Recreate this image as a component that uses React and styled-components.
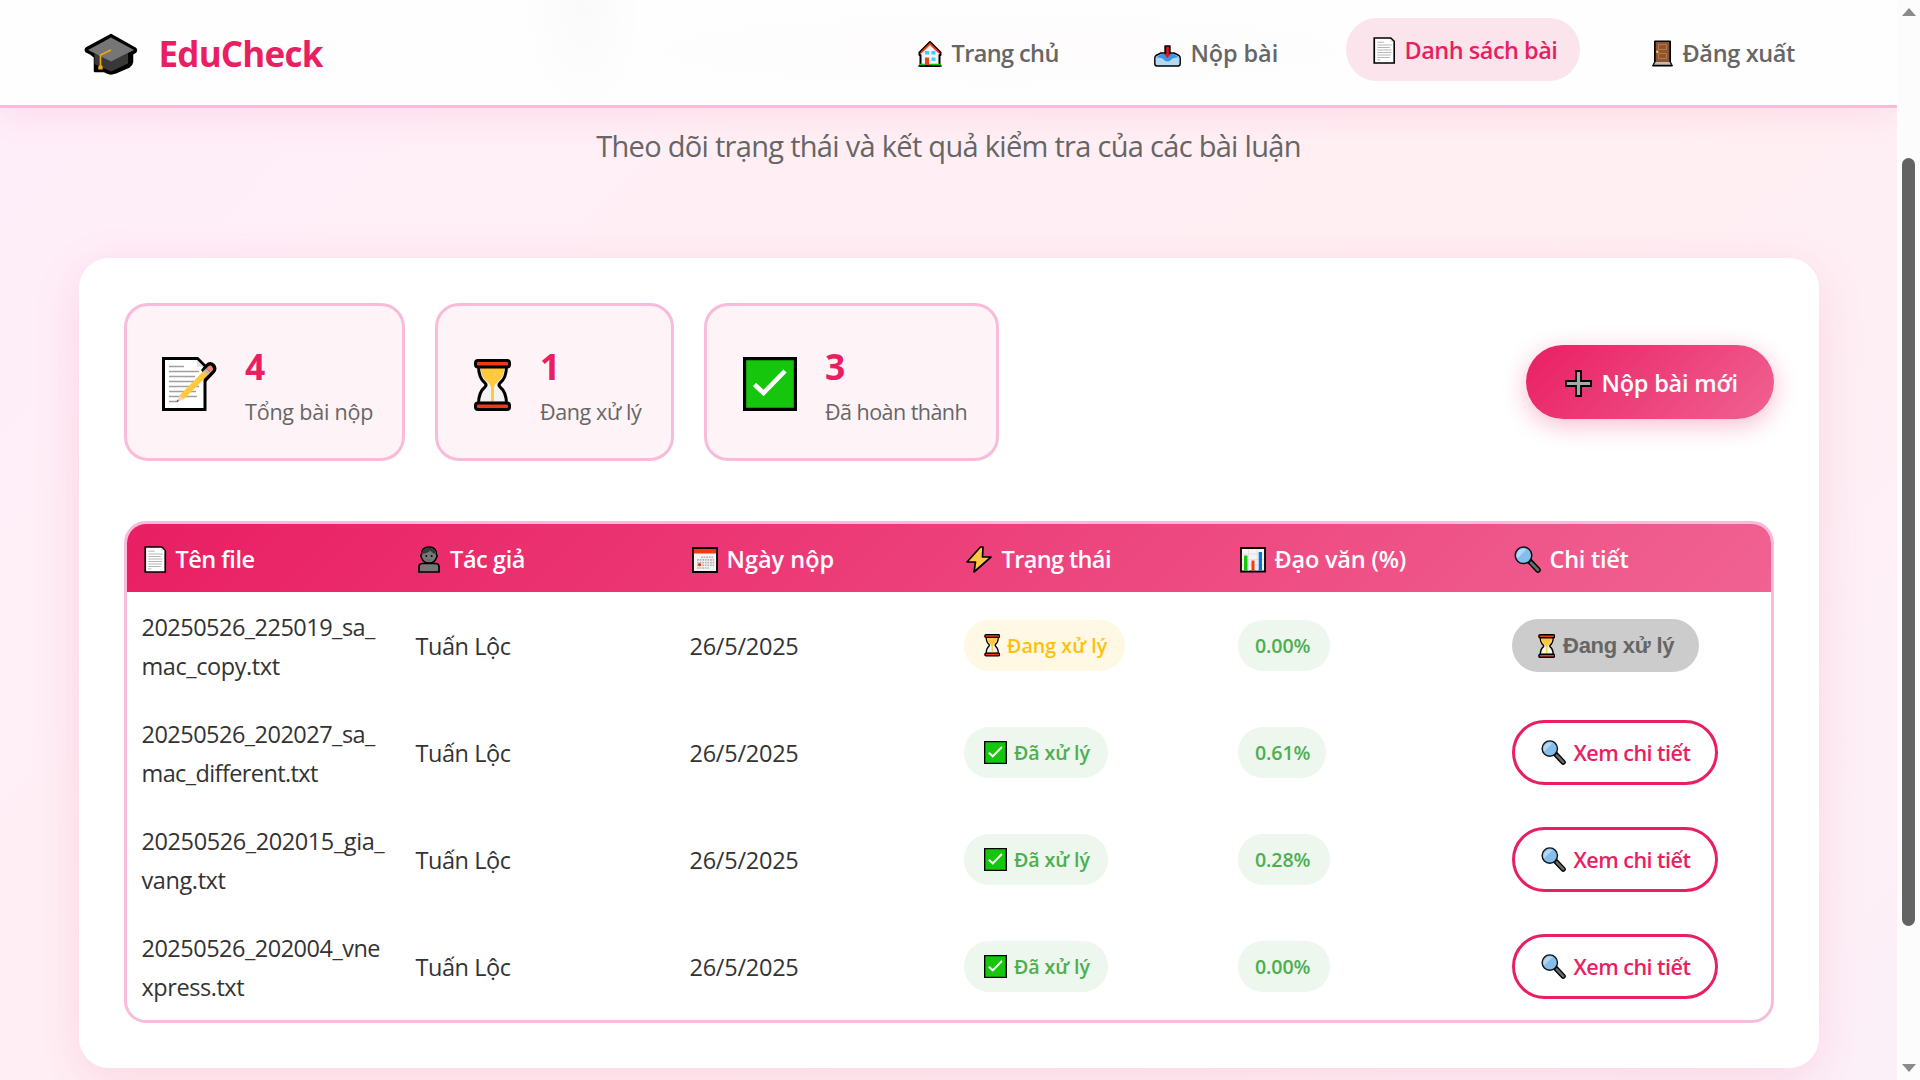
import React from 'react';
import styled, { createGlobalStyle, css } from 'styled-components';

const PINK = '#e91e63';
const SOFT = '#f8bbd9';
const SANS = '"Open Sans", "Noto Sans", sans-serif';

const GlobalStyle = createGlobalStyle`
  * { box-sizing: border-box; }
  body { margin: 0; overflow: hidden; font-family: ${SANS}; color: #333; }
`;

/* ---------- icons ---------- */

const ICONS = {
  cap: {
    box: '0 0 54 42',
    art: (
      <>
        <path d="M27 2 51 15.5Q53 17 51 19L48 21V29Q47.5 32 45 33.5L31 39.500Q27 41.500 23 39.500L20 38H11V24L7.500 21 2.500 18.500Q1 16.500 3 15Z" fill="#000" stroke="#000" strokeWidth="2.500" strokeLinejoin="round" />
        <path d="M10.500 20V31L27 38.500 44 30.500V20L27 28Z" fill="#383838" />
        <path d="M27 4.500 50 17 27 28.500 4 17Z" fill="#767676" />
        <path d="M27 17 16.500 22V33" fill="none" stroke="#f3a90c" strokeWidth="1.600" />
        <path d="M14.300 36.500V33.500L16.500 31.500 18.700 33.500V36.500Z" fill="#f3a90c" />
      </>
    ),
  },
  house: {
    box: '0 0 24 27',
    art: (
      <>
        <path d="M12 2 22.500 12.500V15H21.500V26H2.500V15H1.500V12.500Z" fill="#f4f4f4" stroke="#000" strokeWidth="2" strokeLinejoin="round" />
        <path d="M3 12.700 12 3.800 21 12.700" fill="none" stroke="#f03a17" strokeWidth="1.800" />
        <path d="M7 11h4v3.500H7zM13.500 11h4v3.500h-4zM13.500 17.500h4V21h-4z" fill="#30d5fb" />
        <path d="M7 17.500h4V25H7z" fill="#e8441f" />
        <path d="M1 23.700h6V26H1zM11 23.700h12V26H11z" fill="#16c60c" />
        <path d="M.3 26h23.400" stroke="#000" strokeWidth="1.400" />
      </>
    ),
  },
  inbox: {
    box: '0 0 27 27',
    art: (
      <>
        <path d="M11 6H16V13H20L25 15.500Q26.200 16.500 26.200 18V23.500Q26.200 26 24 26H3Q.8 26 .8 23.500V18Q.8 16.500 2 15.500L7 13H11Z" fill="#b4daf2" stroke="#000" strokeWidth="1.400" strokeLinejoin="round" />
        <path d="M7.500 14H19.500L25 17.500Q20 17 17.800 19 16 21.500 13.500 21.500 11 21.500 9.200 19 7 17 2 17.500Z" fill="#3b96e0" />
        <path d="M11 6H16V14H11Z" fill="#111" />
        <path d="M12.300 7H14.800V14H17L13.500 18 10 14H12.300Z" fill="#e81123" />
      </>
    ),
  },
  page: {
    box: '0 0 22 27',
    art: (
      <>
        <path d="M1 1H17.500L21 4.500V26H1Z" fill="#fff" stroke="#000" strokeWidth="1.700" />
        <path d="M17.200 1.700V4.800H20.300Z" fill="#ddd" />
        <path d="M4 5.200H10.500M4 8H18.500M4 10.500H16.500M4 13H18M4 15.500H18M4 18H17.500M4 20.500H16.500M4 22.800H7" stroke="#b5b5b5" strokeWidth="1" />
      </>
    ),
  },
  door: {
    box: '0 0 21 27',
    art: (
      <>
        <path d="M2.500 1H18.500V22L20.500 26H.5L2.500 22Z" fill="#000" stroke="#000" strokeLinejoin="round" />
        <path d="M3.700 1.900H17.300V22H3.700Z" fill="#8e562e" />
        <path d="M6.500 4.500H14.500V9.500H6.500ZM6.500 13.500H14.500V18.500H6.500Z" fill="none" stroke="#b5794c" strokeWidth="1" />
        <circle cx="5.300" cy="11.700" r="1.300" fill="#ffc83d" />
        <path d="M3.500 22H17.500L19 24.700H2Z" fill="#bdbdbd" />
      </>
    ),
  },
  memo: {
    box: '0 0 55 54',
    art: (
      <>
        <path d="M1.500 1.500H35.500L43 9V52.500H1.500Z" fill="#fff" stroke="#000" strokeWidth="3" />
        <path d="M35 3V10H42Z" fill="#e3e3e3" />
        <path d="M7 9.500H22M7 14.500H37M7 19.500H33M7 24.500H37M7 29.500H37M7 34.500H34M7 39.500H35M7 44.500H16" stroke="#a0a0a0" strokeWidth="1.400" />
        <path d="M40 13 44 8Q48 4 52 7.500 55.500 11.500 52 15.500L43 25V17Z" fill="#000" stroke="#000" strokeWidth="1.500" strokeLinejoin="round" />
        <path d="M17.500 38.500 42 13.500 46.500 17.500 21.500 42.500Z" fill="#ffc83d" />
        <path d="M17.500 38.500 21.500 42.500 14.500 45Z" fill="#f5d2c3" />
        <path d="M15.500 42.500 17 44.200 14.300 45Z" fill="#555" />
        <path d="M41.500 14 44 11.500 48.500 15.500 46 18Z" fill="#bdbdbd" />
        <path d="M44 11.500 46.500 9.200Q48.500 7.800 50.200 9.700 52 11.700 50.500 13.500L48.500 15.500Z" fill="#f4867a" />
      </>
    ),
  },
  hourglass: {
    box: '0 0 37 52',
    art: (
      <>
        <path d="M4.500 7Q4.500 19 11 24Q13 26 11 28Q4.500 33 4.500 45H32.500Q32.500 33 26 28Q24 26 26 24Q32.500 19 32.500 7Z" fill="#f2f2f2" stroke="#000" strokeWidth="3" />
        <path d="M6.500 8.500H30.500Q30 18 24 22.500 20 25.500 20 29V42.500H29L32 44H5L8 42.500H17V29Q17 25.500 13 22.500 7 18 6.500 8.500Z" fill="#ffc83d" />
        <rect x="1.500" y="1.500" width="34" height="6.500" rx="2.500" fill="#f03a17" stroke="#000" strokeWidth="3" />
        <rect x="1.500" y="44" width="34" height="6.500" rx="2.500" fill="#f03a17" stroke="#000" strokeWidth="3" />
        <path d="M21 15h1M26 14.500h1M23.500 19h1" stroke="#ffe49a" strokeWidth="1.200" />
      </>
    ),
  },
  check: {
    box: '0 0 54 54',
    art: (
      <>
        <path d="M1.500 1.500H52.500V52.500H1.500Z" fill="#16c60c" stroke="#000" strokeWidth="3.400" />
        <path d="M11.500 27.500 20.500 36 42 14" fill="none" stroke="#fff" strokeWidth="4.600" />
      </>
    ),
  },
  plus: {
    box: '0 0 27 27',
    art: <path d="M11 1H16V11H26V16H16V26H11V16H1V11H11Z" fill="#a8a8a8" stroke="#000" strokeWidth="1.800" />,
  },
  person: {
    box: '0 0 22 27',
    art: (
      <>
        <path d="M1 26V20.500Q1 17.500 4.500 17.500H17.500Q21 17.500 21 20.500V26Z" fill="#767676" stroke="#000" strokeWidth="1.700" />
        <path d="M11 1Q18.500 1 18.500 8.500 19.800 9.500 18.500 11.500 17 17 11 17 5 17 3.500 11.500 2.200 9.500 3.500 8.500 3.500 1 11 1Z" fill="#767676" stroke="#000" strokeWidth="1.500" />
        <path d="M4.300 8Q4 1.800 11 1.800 18 1.800 17.700 8 14 7.500 12.500 4.800 9 7.500 4.300 8Z" fill="#383838" />
        <circle cx="8.300" cy="10" r=".9" /><circle cx="13.700" cy="10" r=".9" />
        <path d="M8.800 13.700Q11 15 13.200 13.700" fill="none" stroke="#555" strokeWidth=".7" />
      </>
    ),
  },
  calendar: {
    box: '0 0 26 27',
    art: (
      <>
        <path d="M1 2H25V26H1Z" fill="#f4f4f4" stroke="#000" strokeWidth="1.800" />
        <path d="M1.900 2.900H24.100V7.500H1.900Z" fill="#f03a17" />
        <path d="M9 11.200H22M5 13.900H22M5 16.600H22M5 19.300H22M5 22H17" stroke="#b5b5b5" strokeWidth="1.600" strokeDasharray="1.800 .8" />
        <circle cx="7.500" cy="18.700" r="1.600" fill="#f03a17" />
      </>
    ),
  },
  bolt: {
    box: '0 0 26 27',
    art: <path d="M14.500 1 1 16H9.500L8 26 25 11H16.500L17 1Z" fill="#ffc83d" stroke="#000" strokeWidth="1.700" strokeLinejoin="round" />,
  },
  chart: {
    box: '0 0 26 27',
    art: (
      <>
        <path d="M1 2H25V25.500H1Z" fill="#f4f4f4" stroke="#000" strokeWidth="1.800" />
        <path d="M2 8H24M2 13.500H24M2 19H24M8.500 3V25M17 3V25" stroke="#dcdcdc" strokeWidth=".8" />
        <path d="M4 9.500H7.500V24.500H4Z" fill="#16c60c" />
        <path d="M11.500 14.500H14.500V24.500H11.500Z" fill="#f03a17" />
        <path d="M18.700 6H22V24.500H18.700Z" fill="#0078d7" />
      </>
    ),
  },
  lens: {
    box: '0 0 27 27',
    art: (
      <>
        <path d="M16 15.500 24 24" stroke="#000" strokeWidth="5.600" strokeLinecap="round" />
        <path d="M17 16.700 24 24" stroke="#636c70" strokeWidth="2.800" strokeLinecap="round" />
        <circle cx="9.500" cy="9.300" r="8.300" fill="#83beec" stroke="#111" strokeWidth="1.500" />
        <path d="M3.300 12.500A7 7 0 0 1 12.500 3.300Z" fill="#b4d8f3" />
      </>
    ),
  },
};

const IconSlot = styled.span`
  display: flex;
  flex: none;
  align-items: center;
  width: ${p => p.$advance}px;
  padding-left: ${p => p.$inset}px;
  padding-top: ${p => p.$drop}px;
`;

const Glyph = styled.svg`
  display: block;
  flex: none;
  width: ${p => p.$w}px;
  height: ${p => p.$h}px;
`;

function Icon({ name, w, h, inset = 0, drop = 0, advance }) {
  return (
    <IconSlot $advance={advance} $inset={inset} $drop={drop}>
      <Glyph viewBox={ICONS[name].box} $w={w} $h={h} aria-hidden="true">{ICONS[name].art}</Glyph>
    </IconSlot>
  );
}

/* ---------- page frame ---------- */

const Frame = styled.div`
  display: grid;
  grid-template-columns: 1fr 23px;
  height: 1080px;
  overflow: hidden;
`;

const Page = styled.div`
  height: 1080px;
  overflow: hidden;
  background: linear-gradient(135deg, #feeefa 0%, #ffeff5 30%, #ffeff3 60%, #fcf0f8 100%);
`;

const ScrollTrack = styled.div`
  display: flex;
  flex-direction: column;
  align-items: center;
  padding: 8px 0 8px;
  background: #fcfcfc;
`;

const ScrollArrow = styled.i`
  width: 0;
  height: 0;
  border: 7.500px solid transparent;
  ${p => p.$up
    ? css`border-top: 0; border-bottom: 8px solid #8a8a8a;`
    : css`border-bottom: 0; border-top: 8px solid #8a8a8a; margin-top: auto;`}
`;

const ScrollThumb = styled.div`
  width: 13px;
  height: 768px;
  margin-top: 142px;
  border-radius: 7px;
  background: #636363;
`;

/* ---------- text ---------- */

const Label = styled.span`
  white-space: nowrap;
  letter-spacing: ${p => p.$track || 0}px;
`;

/* ---------- navigation ---------- */

const NavBar = styled.nav`
  position: relative;
  z-index: 2;
  height: 108px;
  padding: 0 78.500px;
  display: flex;
  justify-content: space-between;
  background:
    radial-gradient(ellipse 62px 110px at 583px 10px, rgba(0, 0, 0, .014), transparent),
    radial-gradient(ellipse 420px 44px at 1000px 50px, rgba(233, 30, 99, .012), transparent),
    #fefefe;
  border-bottom: 3px solid ${SOFT};
  box-shadow: 0 5px 37px rgba(233, 30, 99, .1);
`;

const Brand = styled.div`
  display: flex;
  align-items: center;
  padding: 2px 0 0 5.500px;
  font-size: 35px;
  font-weight: 700;
  line-height: 56px;
  color: ${PINK};
`;

const Menu = styled.div`
  display: flex;
  align-items: center;
  gap: 44px;
`;

const MenuItem = styled.a`
  display: flex;
  align-items: center;
  width: ${p => p.$width}px;
  height: 63px;
  padding: 1px 0 0 25px;
  border-radius: 31px;
  font-size: 23.500px;
  font-weight: 600;
  color: ${p => (p.$active ? PINK : '#666')};
  background: ${p => (p.$active ? '#fce4ec' : 'transparent')};
  margin-bottom: ${p => (p.$active ? 6 : 0)}px;
`;

/* ---------- hero ---------- */

const Hero = styled.header`
  height: 150px;
  padding-top: 14px;
  text-align: center;
`;

const Subtitle = styled.p`
  margin: 0;
  font-size: 29px;
  line-height: 48px;
  color: #666;
`;

/* ---------- card ---------- */

const Card = styled.main`
  width: 1740px;
  margin: 0 auto;
  padding: 45px;
  border-radius: 30px;
  background: #fff;
  box-shadow: 0 12px 50px rgba(233, 30, 99, .12);
`;

const Summary = styled.section`
  display: flex;
  align-items: center;
  gap: 30px;
  height: 158px;
  margin-bottom: 60px;
`;

const Stat = styled.div`
  display: flex;
  align-items: center;
  width: ${p => p.$width}px;
  height: 158px;
  padding-left: 35.500px;
  border: 3px solid ${SOFT};
  border-radius: 24px;
  background: #fef3f7;
`;

const StatInfo = styled.div`
  display: flex;
  flex-direction: column;
  padding-top: 2px;
`;

const StatNumber = styled.strong`
  font-size: 35.500px;
  font-weight: 700;
  line-height: 57px;
  color: ${PINK};
`;

const StatLabel = styled(Label)`
  font-size: 21.500px;
  line-height: 34px;
  color: #666;
`;

const SubmitButton = styled.button`
  display: flex;
  align-items: center;
  width: 248px;
  height: 74px;
  margin-left: auto;
  padding: 2px 0 0 39px;
  border: 0;
  border-radius: 37px;
  font: 600 23.500px ${SANS};
  color: #fff;
  background: linear-gradient(135deg, ${PINK}, #f06292);
  box-shadow: 0 6px 25px rgba(233, 30, 99, .3);
`;

/* ---------- table ---------- */

const Table = styled.section`
  border: 3px solid ${SOFT};
  border-radius: 22px;
  overflow: hidden;
`;

const Columns = styled.div`
  display: grid;
  grid-template-columns: repeat(6, 1fr);
  align-items: center;
`;

const HeadRow = styled(Columns)`
  height: 68px;
  padding-top: 2px;
  font-size: 23.500px;
  font-weight: 600;
  color: #fff;
  background: linear-gradient(135deg, ${PINK}, #f06292);
`;

const BodyRow = styled(Columns)`
  height: 107px;
  font-size: 23.500px;
`;

const Cell = styled.div`
  display: flex;
  align-items: center;
  padding-left: 15px;
`;

const FileName = styled.div`
  display: flex;
  flex-direction: column;
  padding-top: 2px;
  line-height: 38.500px;
`;

const CellText = styled(Label)`
  padding-top: 1px;
`;

const Badge = styled.span`
  display: flex;
  align-items: center;
  height: 51px;
  width: ${p => p.$width}px;
  padding-left: ${p => p.$pad}px;
  border-radius: 25px;
  font-size: 19.600px;
  font-weight: 600;
  color: ${p => (p.$waiting ? '#ffc107' : '#4caf50')};
  background: ${p => (p.$waiting ? '#fff8e5' : '#edf7ed')};
`;

const DetailButton = styled.button`
  display: flex;
  align-items: center;
  width: 206px;
  height: 65px;
  padding: 0 0 0 26px;
  border: 3px solid ${PINK};
  border-radius: 33px;
  background: #fff;
  font: 600 21.500px ${SANS};
  color: ${PINK};
`;

const WaitingButton = styled.button`
  display: flex;
  align-items: center;
  width: 187px;
  height: 53px;
  padding: 1px 0 0 26px;
  border: 0;
  border-radius: 26.500px;
  background: #ccc;
  font: 700 22px "Liberation Sans", sans-serif;
  color: #666;
`;

/* ---------- data ---------- */

const MENU = [
  { text: 'Trang chủ', track: -0.6, width: 192, icon: { name: 'house', w: 24, h: 27, inset: 2, advance: 36 } },
  { text: 'Nộp bài', track: -0.1, width: 175, icon: { name: 'inbox', w: 27, h: 27, inset: 2.500, advance: 39 } },
  { text: 'Danh sách bài', track: -0.5, width: 234.500, active: true, icon: { name: 'page', w: 22.500, h: 27, inset: 2, advance: 34 } },
  { text: 'Đăng xuất', track: -0.35, width: 194.500, icon: { name: 'door', w: 21, h: 27, inset: 3, advance: 33.500 } },
];

const STATS = [
  { value: 4, text: 'Tổng bài nộp', track: -0.2, width: 281, icon: { name: 'memo', w: 55, h: 54, drop: 4, advance: 83 } },
  { value: 1, text: 'Đang xử lý', track: -0.38, width: 239, icon: { name: 'hourglass', w: 37, h: 52, drop: 6, inset: 1, advance: 67 } },
  { value: 3, text: 'Đã hoàn thành', track: -0.54, width: 295, icon: { name: 'check', w: 54, h: 54, drop: 4, inset: 0.500, advance: 83 } },
];

const HEADS = [
  { text: 'Tên file', track: -0.5, icon: { name: 'page', w: 22.500, h: 27, inset: 2.500, advance: 34 } },
  { text: 'Tác giả', track: -0.4, icon: { name: 'person', w: 22, h: 27, inset: 2.500, advance: 34.500 } },
  { text: 'Ngày nộp', track: 0, icon: { name: 'calendar', w: 26, h: 27, inset: 2.500, advance: 37 } },
  { text: 'Trạng thái', track: -0.62, icon: { name: 'bolt', w: 26, h: 27, inset: 2, advance: 38 } },
  { text: 'Đạo văn (%)', track: -0.2, icon: { name: 'chart', w: 26, h: 27, inset: 2.500, advance: 37 } },
  { text: 'Chi tiết', track: -0.25, icon: { name: 'lens', w: 27, h: 27, inset: 2, advance: 38 } },
];

const ROWS = [
  { file: ['20250526_225019_sa_', 'mac_copy.txt'], track: [-0.52, -0.42], waiting: true, percent: '0.00%', percentWidth: 92 },
  { file: ['20250526_202027_sa_', 'mac_different.txt'], track: [-0.52, -0.6], percent: '0.61%', percentWidth: 88 },
  { file: ['20250526_202015_gia_', 'vang.txt'], track: [-0.4, -0.4], percent: '0.28%', percentWidth: 92 },
  { file: ['20250526_202004_vne', 'xpress.txt'], track: [-0.5, -0.45], percent: '0.00%', percentWidth: 92 },
];

function SubmissionRow({ row }) {
  return (
    <BodyRow>
      <Cell>
        <FileName>
          <Label $track={row.track[0]}>{row.file[0]}</Label>
          <Label $track={row.track[1]}>{row.file[1]}</Label>
        </FileName>
      </Cell>
      <Cell><CellText $track={-0.45}>Tuấn Lộc</CellText></Cell>
      <Cell><CellText $track={-0.25}>26/5/2025</CellText></Cell>
      <Cell>
        {row.waiting ? (
          <Badge $waiting $width={161} $pad={20}>
            <Icon name="hourglass" w={16.500} h={22.500} advance={23.500} />
            <Label $track={0.05}>Đang xử lý</Label>
          </Badge>
        ) : (
          <Badge $width={144} $pad={20}>
            <Icon name="check" w={23} h={23} advance={30.500} />
            <Label $track={-0.1}>Đã xử lý</Label>
          </Badge>
        )}
      </Cell>
      <Cell><Badge $width={row.percentWidth} $pad={17.500}><Label $track={-0.1}>{row.percent}</Label></Badge></Cell>
      <Cell>
        {row.waiting ? (
          <WaitingButton>
            <Icon name="hourglass" w={17.500} h={24} advance={25.500} />
            <Label $track={-0.25}>Đang xử lý</Label>
          </WaitingButton>
        ) : (
          <DetailButton>
            <Icon name="lens" w={25} h={25} advance={33} />
            <Label $track={-0.52}>Xem chi tiết</Label>
          </DetailButton>
        )}
      </Cell>
    </BodyRow>
  );
}

export default function App() {
  return (
    <Frame>
      <GlobalStyle />
      <Page>
        <NavBar>
          <Brand>
            <Icon name="cap" w={54} h={42} drop={1} advance={74.500} />
            <Label $track={-0.8}>EduCheck</Label>
          </Brand>
          <Menu>
            {MENU.map(item => (
              <MenuItem key={item.text} $width={item.width} $active={item.active}>
                <Icon {...item.icon} />
                <Label $track={item.track}>{item.text}</Label>
              </MenuItem>
            ))}
          </Menu>
        </NavBar>
        <Hero>
          <Subtitle>
            <Label $track={-0.7}>Theo dõi trạng thái và kết quả kiểm tra của các bài luận</Label>
          </Subtitle>
        </Hero>
        <Card>
          <Summary>
            {STATS.map(stat => (
              <Stat key={stat.text} $width={stat.width}>
                <Icon {...stat.icon} />
                <StatInfo>
                  <StatNumber>{stat.value}</StatNumber>
                  <StatLabel $track={stat.track}>{stat.text}</StatLabel>
                </StatInfo>
              </Stat>
            ))}
            <SubmitButton>
              <Icon name="plus" w={27} h={27} advance={37} />
              <Label $track={-0.2}>Nộp bài mới</Label>
            </SubmitButton>
          </Summary>
          <Table>
            <HeadRow>
              {HEADS.map(head => (
                <Cell key={head.text}>
                  <Icon {...head.icon} />
                  <Label $track={head.track}>{head.text}</Label>
                </Cell>
              ))}
            </HeadRow>
            {ROWS.map(row => <SubmissionRow key={row.file[0]} row={row} />)}
          </Table>
        </Card>
      </Page>
      <ScrollTrack>
        <ScrollArrow $up />
        <ScrollThumb />
        <ScrollArrow />
      </ScrollTrack>
    </Frame>
  );
}
